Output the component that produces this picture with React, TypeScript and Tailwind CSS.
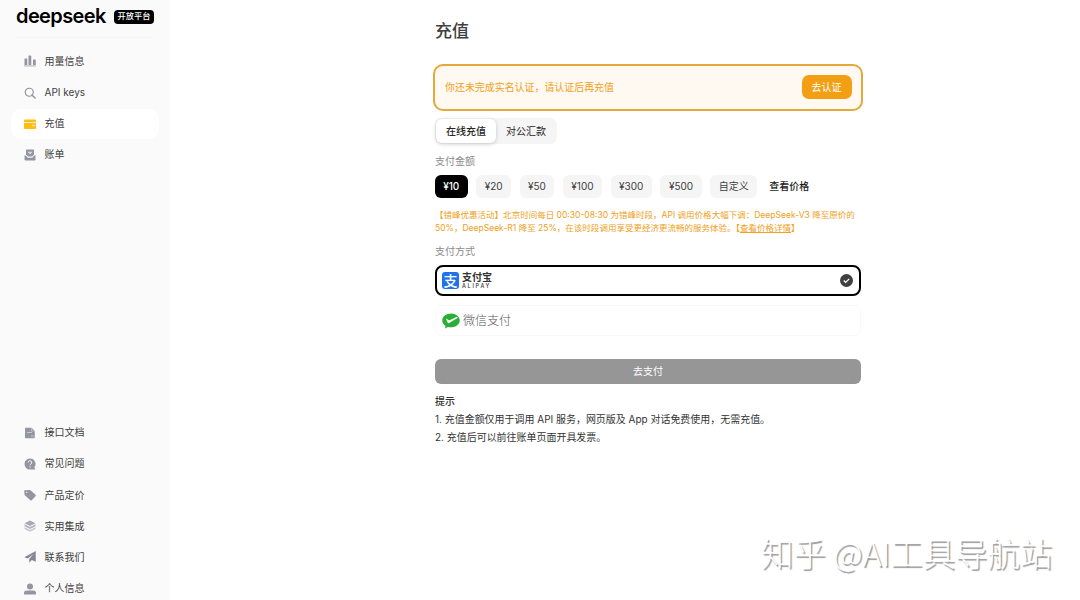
import type { ReactNode } from "react"
import clsx from "clsx"

interface NavItem {
  label: string
  icon: ReactNode
  active?: boolean
}

function Icon({ children, className = "text-[#9494a3]" }: { children: ReactNode; className?: string }) {
  return (
    <svg viewBox="0 0 24 24" fill="currentColor" className={clsx("size-3 shrink-0", className)}>
      {children}
    </svg>
  )
}

const topItems: NavItem[] = [
  {
    label: "用量信息",
    icon: (
      <Icon>
        <rect x="1" y="7" width="5.500" height="13" rx="1" />
        <rect x="9" y="1" width="5.500" height="19" rx="1" />
        <rect x="18" y="9" width="5.500" height="11" rx="1" />
        <rect x="0" y="20.500" width="24" height="2.500" opacity=".6" />
      </Icon>
    ),
  },
  {
    label: "API keys",
    icon: (
      <Icon>
        <circle cx="10.5" cy="10.5" r="8" fill="none" stroke="currentColor" strokeWidth="2.4" />
        <path d="M16 16l6 6" stroke="currentColor" strokeWidth="3" strokeLinecap="round" />
      </Icon>
    ),
  },
  {
    label: "充值",
    active: true,
    icon: (
      <Icon className="text-[#fbbf14]">
        <path d="M2 3h20a2 2 0 0 1 2 2v3H0V5a2 2 0 0 1 2-2z" />
        <path d="M0 9.500h24V20a2 2 0 0 1-2 2H2a2 2 0 0 1-2-2z" />
        <path d="M22 13.500h-5a1.500 1.500 0 0 0 0 3h5z" fill="#ffe694" />
      </Icon>
    ),
  },
  {
    label: "账单",
    icon: (
      <Icon>
        <path d="M5 1h14a1 1 0 0 1 1 1v9l-4 4H8l-4-4V2a1 1 0 0 1 1-1z" />
        <path d="M7 5.500h10L12 11z" fill="#dcdce2" />
        <path d="M1 13h2.500l4 4.500h9l4-4.500H23v8a2 2 0 0 1-2 2H3a2 2 0 0 1-2-2z" />
      </Icon>
    ),
  },
]

const bottomItems: NavItem[] = [
  {
    label: "接口文档",
    icon: (
      <Icon>
        <path d="M4 1.500h11l6.500 6.500v13a1.500 1.500 0 0 1-1.500 1.500H3.500A1.500 1.500 0 0 1 2 21V3.500a2 2 0 0 1 2-2z" />
        <path d="M15 2v6h6" fill="none" stroke="#d5d5dc" strokeWidth="1.300" />
        <path d="M6 11h10M14 18h5" stroke="#d5d5dc" strokeWidth="1.600" />
      </Icon>
    ),
  },
  {
    label: "常见问题",
    icon: (
      <Icon>
        <path d="M12 1a11 11 0 1 0 0 22h9.500a1 1 0 0 0 .8-1.600L20.500 19A11 11 0 0 0 12 1z" />
        <path d="M8.500 9a3.500 3.500 0 1 1 5.200 3c-1.200.7-1.700 1.200-1.700 2.500M12 16.500v2.500" fill="none" stroke="#fafafa" strokeWidth="2" />
      </Icon>
    ),
  },
  {
    label: "产品定价",
    icon: (
      <Icon>
        <path
          fillRule="evenodd"
          d="M1.500 2.500l10-.5a2 2 0 0 1 1.500.6l10 9a2 2 0 0 1 0 2.800l-7.500 8a2 2 0 0 1-2.800 0L1.600 12.500A2 2 0 0 1 1 11L.5 3.500a1 1 0 0 1 1-1zM5.500 5.500a1.300 1.300 0 1 0 0 2.600 1.300 1.300 0 0 0 0-2.600z"
        />
      </Icon>
    ),
  },
  {
    label: "实用集成",
    icon: (
      <Icon>
        <path d="M12 1l11 5.500L12 12 1 6.500z" opacity=".8" />
        <path d="M1 8.500L12 14l11-5.500v4L12 18 1 12.500z" opacity=".7" />
        <path d="M1 14.500L12 20l11-5.500v3.500l-11 5.500L1 18z" opacity=".5" />
      </Icon>
    ),
  },
  {
    label: "联系我们",
    icon: (
      <Icon className="text-[#85859a]">
        <path d="M23.500 0v21.500l-8-3.500-5 5.500V16L19 6 7.500 15 .5 12.500z" />
      </Icon>
    ),
  },
  {
    label: "个人信息",
    icon: (
      <Icon>
        <circle cx="12" cy="7" r="6" />
        <path d="M0 23v-3c0-3.500 3-5 6-5h12c3 0 6 1.500 6 5v3z" />
      </Icon>
    ),
  },
]

const amounts = [
  { label: "¥10", width: "w-[32.5px]" },
  { label: "¥20", width: "w-[35.2px]" },
  { label: "¥50", width: "w-[34.6px]" },
  { label: "¥100", width: "w-[39.3px]" },
  { label: "¥300", width: "w-[41.2px]" },
  { label: "¥500", width: "w-[41.5px]" },
  { label: "自定义", width: "w-[47px]" },
]

function NavList({ items }: { items: NavItem[] }) {
  return (
    <nav className="flex flex-col gap-[1.2px]">
      {items.map((item) => (
        <a
          key={item.label}
          className={clsx(
            "flex h-[30px] w-[148px] items-center gap-[8.5px] rounded-[10px] pl-[13px] text-[#404040]",
            item.active && "bg-white"
          )}
        >
          {item.icon}
          <span>{item.label}</span>
        </a>
      ))}
    </nav>
  )
}

function Sidebar() {
  return (
    <aside className="flex w-[170px] shrink-0 flex-col justify-between bg-[#fafafa] pl-[11px]">
      <div>
        <div className="mr-[16px] ml-[5px] flex h-[38px] items-start gap-[8px] border-b border-[#f4f4f4]">
          <span className="w-[90px] pt-[5px] text-[20px] leading-[22px] font-semibold tracking-[-0.6px] text-black">
            deepseek
          </span>
          <span className="mt-[9.500px] flex h-[14px] w-10 shrink-0 items-center justify-center rounded-[4px] bg-black text-[8.2px] font-medium whitespace-nowrap text-white">
            开放平台
          </span>
        </div>
        <div className="pt-[8.4px]">
          <NavList items={topItems} />
        </div>
      </div>
      <div className="-mb-[3.6px]">
        <NavList items={bottomItems} />
      </div>
    </aside>
  )
}

function AlipayLogo() {
  return (
    <div className="flex items-center gap-[3px]">
      <span className="flex size-[17px] items-center justify-center rounded-[3px] bg-[#1f74e8] text-[14px] leading-none font-medium text-white">
        支
      </span>
      <span className="flex flex-col text-[#333]">
        <span className="text-[10px] leading-[11px] font-bold">支付宝</span>
        <span className="text-[5.5px] leading-[6px] font-medium tracking-[1.7px]">ALIPAY</span>
      </span>
    </div>
  )
}

function WechatPayIcon() {
  return (
    <svg viewBox="0 0 36 32" className="h-4 w-[18px]">
      <path
        fill="#2aae37"
        d="M18 1C8.300 1 .5 7.200.5 15c0 4.500 2.500 8.300 6.500 10.800L6 31l6-3.200c1.900.5 3.900.8 6 .8 9.700 0 17.500-6 17.500-13.600S27.700 1 18 1z"
      />
      <path
        fill="#fff"
        d="M13.500 20.500c-.8.400-1.300.2-1.700-.5l-3.500-7.500c-.3-.7.300-1.200 1-.8l4 2.700c.6.400 1.200.4 1.900.1L30 7.500c.8.800 1.200 1.300 1.700 2z"
      />
    </svg>
  )
}

export default function App() {
  return (
    <div className="relative flex h-[600px] w-[1080px] overflow-hidden bg-white font-[Inter,'Noto_Sans_CJK_SC',sans-serif] text-[10px] leading-[15px] text-[#404040]">
      <Sidebar />
      <main className="ml-[265px] flex w-[426px] flex-col">
        <h1 className="mt-[19px] text-[17px] leading-6 font-medium">充值</h1>

        <div className="-mx-[2px] mt-[21px] flex h-[47px] shrink-0 items-center justify-between rounded-[10px] border-2 border-[#e3a93a] bg-[#fff9f2] pr-[9.500px] pl-[10px]">
          <span className="text-[9.95px] text-[#f0a020]">你还未完成实名认证，请认证后再充值</span>
          <button className="mb-px h-6 w-[50px] rounded-[7px] bg-[#f29f13] text-white">去认证</button>
        </div>

        <div className="mt-[7px] flex h-[26px] w-[122px] items-center rounded-[7px] bg-[#f5f5f5] p-px text-[#262626]">
          <button className="h-6 w-[60px] rounded-[6px] bg-white font-medium shadow-[0_1px_4px_rgba(0,0,0,0.2)]">在线充值</button>
          <button className="h-6 flex-1">对公汇款</button>
        </div>

        <h2 className="mt-[10px] text-[#8b8b8b]">支付金额</h2>
        <div className="mt-[5.500px] flex h-[23px] items-center gap-[8.5px]">
          {amounts.map(({ label, width }, i) => (
            <button
              key={label}
              className={clsx("h-[23px] rounded-[6px]", width, i === 0 ? "bg-black font-medium text-white" : "bg-[#f5f5f5]")}
            >
              {label}
            </button>
          ))}
          <a className="ml-[3.500px] font-medium text-[#1a1a1a]">查看价格</a>
        </div>

        <p className="mt-[11px] text-[8.52px] leading-[13px] whitespace-nowrap text-[#f0a020]">
          【错峰优惠活动】北京时间每日 00:30-08:30 为错峰时段，API 调用价格大幅下调：DeepSeek-V3 降至原价的
          <br />
          50%，DeepSeek-R1 降至 25%，在该时段调用享受更经济更流畅的服务体验。【
          <a className="underline">查看价格详情</a>】
        </p>

        <h2 className="mt-[9.500px] text-[#8b8b8b]">支付方式</h2>
        <div className="mt-[6px] flex h-[31px] shrink-0 items-center justify-between rounded-[8px] border-2 border-black pr-[6px] pl-[5px]">
          <AlipayLogo />
          <svg viewBox="0 0 24 24" className="size-[13px]">
            <circle cx="12" cy="12" r="12" fill="#404040" />
            <path d="M7 12l3.500 3.500L17 9" fill="none" stroke="#fff" strokeWidth="2.500" />
          </svg>
        </div>
        <div className="mt-[9px] flex h-[31px] shrink-0 items-center gap-[3px] rounded-[7px] border border-[#f8f8f8] pl-[6px]">
          <WechatPayIcon />
          <span className="text-[12px] font-light text-[#555]">微信支付</span>
        </div>

        <button className="mt-[23px] h-[24.500px] shrink-0 rounded-[6px] bg-[#969696] text-white">去支付</button>

        <div className="mt-[8.500px] text-[9.97px] leading-[18px] text-[#333]">
          <p className="font-medium">提示</p>
          <p>1. 充值金额仅用于调用 API 服务，网页版及 App 对话免费使用，无需充值。</p>
          <p>2. 充值后可以前往账单页面开具发票。</p>
        </div>
      </main>

      <div className="absolute top-[532px] left-[761px] font-['Noto_Sans_CJK_SC',sans-serif] text-[32.4px] leading-10 font-light whitespace-nowrap text-white [text-shadow:1.5px_1.5px_1px_#999]">
        知乎 @AI工具导航站
      </div>
    </div>
  )
}
